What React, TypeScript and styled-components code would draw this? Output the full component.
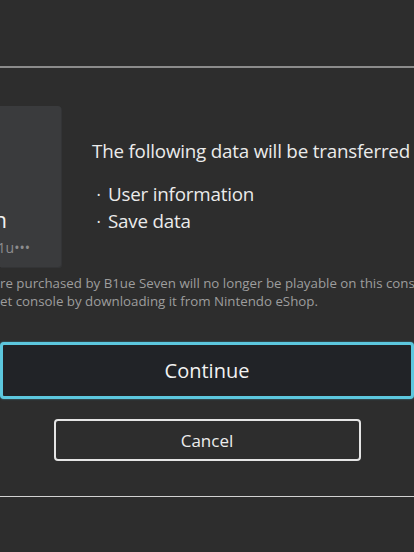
import React from "react";
import styled, { createGlobalStyle } from "styled-components";

const GlobalStyle = createGlobalStyle`
  html, body {
    margin: 0;
    padding: 0;
    background: #2d2d2d;
    overflow: hidden;
  }
  body {
    font-family: "Open Sans", "Noto Sans", sans-serif;
    color: #ebebeb;
  }
`;

const Screen = styled.div`
  width: 414px;
  height: 552px;
  display: flex;
  flex-direction: column;
  background: #2d2d2d;
  overflow: hidden;
`;

const Header = styled.div`
  height: 66px;
  flex-shrink: 0;
  border-bottom: 2px solid #8b8b8b;
`;

const Body = styled.div`
  flex: 1;
  display: flex;
  flex-direction: column;
  padding-top: 38px;
  border-bottom: 1px solid #d2d2d2;
`;

const TopRow = styled.div`
  display: flex;
  gap: 31px;
`;

const UserCard = styled.div`
  width: 61px;
  height: 161px;
  flex-shrink: 0;
  background: #3a3b3d;
  border-radius: 0 3px 3px 0;
  box-shadow: 1px 1px 0 #333436;
  overflow: hidden;
  display: flex;
  flex-direction: column;
  justify-content: flex-end;
  align-items: flex-end;
  padding-bottom: 10px;
  box-sizing: border-box;
`;

const UserName = styled.div`
  white-space: nowrap;
  font-size: 22px;
  line-height: 26px;
  color: #f0f0f0;
  margin-right: 54px;
  margin-bottom: 7px;
`;

const UserMail = styled.div`
  white-space: nowrap;
  font-size: 14px;
  line-height: 18px;
  color: #8d8d8f;
  margin-right: 31px;
`;

const Info = styled.div`
  display: flex;
  flex-direction: column;
  padding-top: 33px;
  white-space: nowrap;
`;

const Lead = styled.div`
  font-size: 18.8px;
  line-height: 24px;
  letter-spacing: -0.2px;
  margin-bottom: 18px;
`;

const Item = styled.div`
  font-size: 18.8px;
  line-height: 27px;
  letter-spacing: -0.2px;
  &::before {
    content: "•";
    display: inline-block;
    width: 16px;
    padding-left: 5px;
    box-sizing: border-box;
    font-size: 9px;
    vertical-align: 3px;
  }
`;

const Note = styled.div`
  margin-top: 7px;
  font-size: 13.3px;
  line-height: 18px;
  color: #9d9d9d;
  white-space: nowrap;
  overflow: hidden;
`;

const Actions = styled.div`
  display: flex;
  flex-direction: column;
  align-items: center;
  gap: 20px;
  margin-top: 32px;
`;

const PrimaryButton = styled.button`
  width: 414px;
  height: 57px;
  box-sizing: border-box;
  background: #212327;
  border: 3px solid #5cc7de;
  border-radius: 4px;
  color: #f2f2f2;
  font-family: inherit;
  font-size: 20px;
  cursor: pointer;
  box-shadow: 0 0 2px #3f8fa0;
`;

const SecondaryButton = styled.button`
  width: 307px;
  height: 42px;
  box-sizing: border-box;
  background: transparent;
  border: 2px solid #e4e4e4;
  border-radius: 4px;
  color: #ececec;
  font-family: inherit;
  font-size: 17px;
  cursor: pointer;
`;

const Footer = styled.div`
  height: 55px;
  flex-shrink: 0;
`;

function App() {
  return (
    <Screen>
      <GlobalStyle />
      <Header />
      <Body>
        <TopRow>
          <UserCard>
            <UserName>B1ue Seven</UserName>
            <UserMail>b1u•••</UserMail>
          </UserCard>
          <Info>
            <Lead>The following data will be transferred</Lead>
            <Item>User information</Item>
            <Item>Save data</Item>
          </Info>
        </TopRow>
        <Note>
          re purchased by B1ue Seven will no longer be playable on this console.
          <br />
          et console by downloading it from Nintendo eShop.
        </Note>
        <Actions>
          <PrimaryButton>Continue</PrimaryButton>
          <SecondaryButton>Cancel</SecondaryButton>
        </Actions>
      </Body>
      <Footer />
    </Screen>
  );
}

export default App;
